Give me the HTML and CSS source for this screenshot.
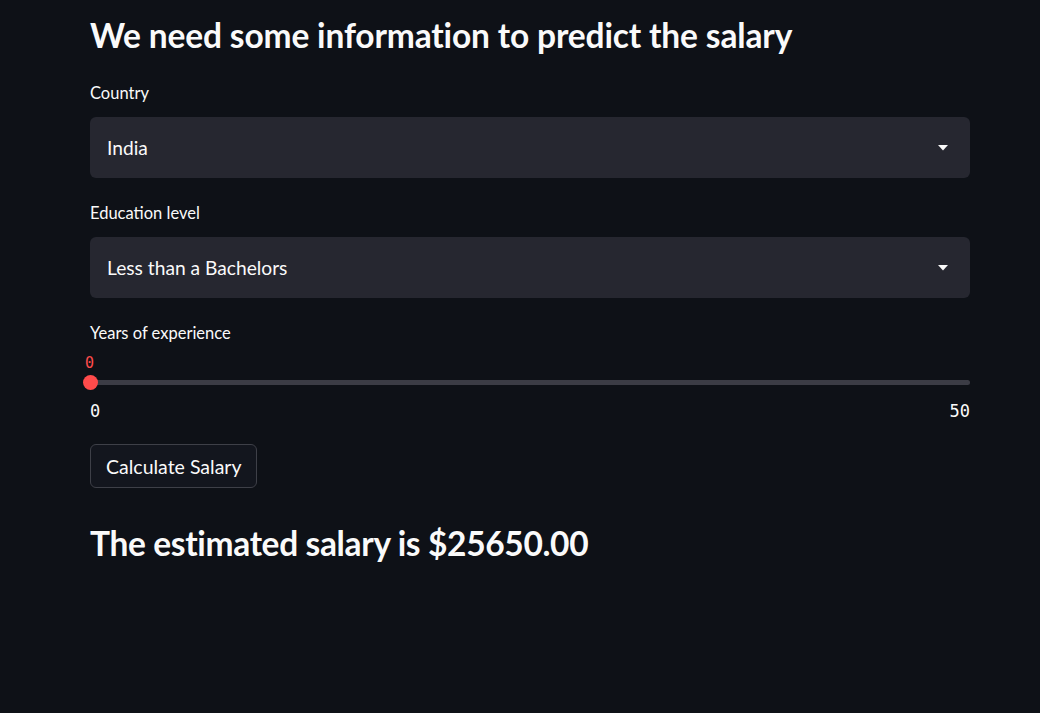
FILE: index.html
```html
<!DOCTYPE html>
<html>
<head>
<meta charset="utf-8">
<link rel="stylesheet" href="styles.css">
</head>
<body>
<main class="main">
  <h3 class="heading">We need some information to predict the salary</h3>

  <div class="field">
    <label class="label">Country</label>
    <div class="select">
      <span class="select-value">India</span>
      <svg class="caret" width="10" height="6" viewBox="0 0 10 6"><path d="M0 0H10L5 5.5Z" fill="#fafafa"/></svg>
    </div>
  </div>

  <div class="field">
    <label class="label">Education level</label>
    <div class="select">
      <span class="select-value">Less than a Bachelors</span>
      <svg class="caret" width="10" height="6" viewBox="0 0 10 6"><path d="M0 0H10L5 5.5Z" fill="#fafafa"/></svg>
    </div>
  </div>

  <div class="field slider-field">
    <label class="label">Years of experience</label>
    <div class="slider">
      <div class="track">
        <div class="thumb"><span class="thumb-value">0</span></div>
      </div>
      <div class="ticks"><span>0</span><span>50</span></div>
    </div>
  </div>

  <button class="btn">Calculate Salary</button>

  <h3 class="heading result">The estimated salary is $25650.00</h3>
</main>
</body>
</html>
```
FILE: styles.css
```css
html, body {
  margin: 0;
  padding: 0;
  background: #0e1117;
  color: #fafafa;
  font-family: "Lato", "Noto Sans", sans-serif;
}
.main {
  width: 880px;
  padding: 0 0 0 90px;
  display: flex;
  flex-direction: column;
}
.heading {
  margin: 0;
  font-size: 33.5px;
  font-weight: 700;
  line-height: 44px;
  padding-top: 13px;
  letter-spacing: -0.15px;
}
.field {
  display: flex;
  flex-direction: column;
}
.label {
  font-size: 16.5px;
  line-height: 24px;
  margin-top: 24px;
  margin-bottom: 12px;
}
.field + .field .label {
  margin-top: 23px;
}
.select {
  height: 61px;
  background: #262730;
  border-radius: 6px;
  display: flex;
  align-items: center;
  justify-content: space-between;
  padding: 0 22px 0 17px;
  box-sizing: border-box;
}
.select-value {
  font-size: 19.2px;
}
.caret {
  display: block;
}
.slider {
  position: relative;
  padding-top: 23px;
}
.track {
  position: relative;
  height: 5px;
  border-radius: 3px;
  background: #3b3c45;
}
.thumb {
  position: absolute;
  left: -7px;
  top: -5px;
  width: 15px;
  height: 15px;
  border-radius: 50%;
  background: #ff4b4b;
}
.thumb-value {
  position: absolute;
  left: 2px;
  top: -21px;
  font-family: "DejaVu Sans Mono", monospace;
  font-size: 15px;
  color: #ff4b4b;
}
.ticks {
  display: flex;
  justify-content: space-between;
  font-family: "DejaVu Sans Mono", monospace;
  font-size: 17px;
  line-height: 20px;
  margin-top: 16px;
}
.btn {
  align-self: flex-start;
  margin-top: 23px;
  height: 44px;
  padding: 0 15px;
  background: #13161e;
  border: 1px solid #3e4048;
  border-radius: 6px;
  color: #fafafa;
  font-family: inherit;
  font-size: 19.5px;
}
.result {
  padding-top: 0;
  margin-top: 33px;
  letter-spacing: -0.35px;
}
```
